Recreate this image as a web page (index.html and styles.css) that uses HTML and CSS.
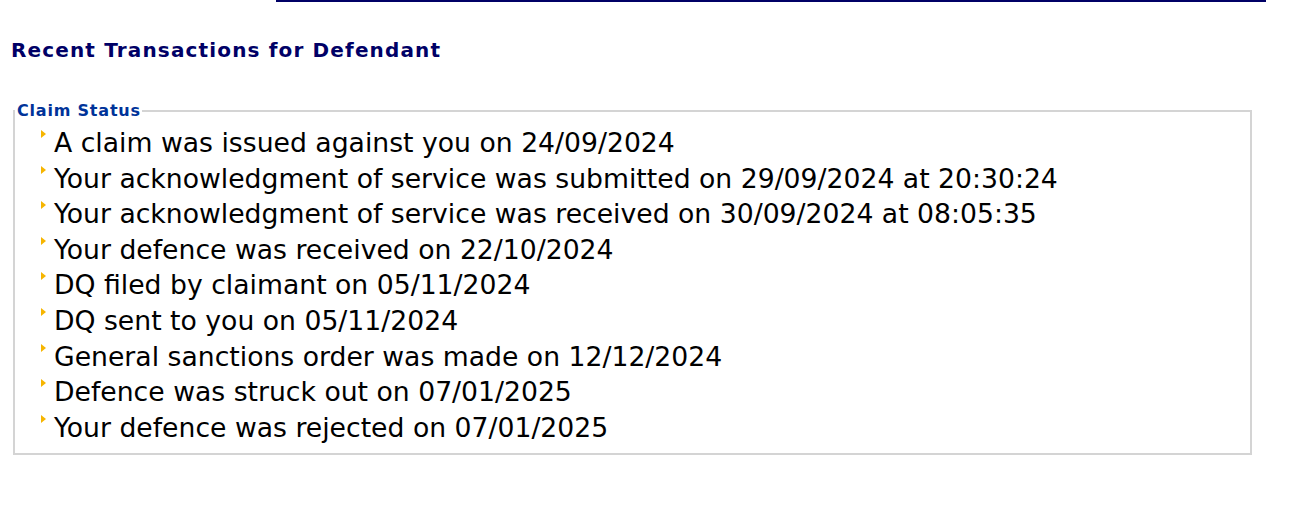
FILE: index.html
```html
<!DOCTYPE html>
<html>
<head>
<meta charset="utf-8">
<link rel="stylesheet" href="styles.css">
</head>
<body>
<div class="topbar"></div>
<h1 class="title">Recent Transactions for Defendant</h1>
<fieldset class="status">
  <legend class="legend">Claim Status</legend>
  <ul class="list">
    <li class="item">A claim was issued against you on 24/09/2024</li>
    <li class="item">Your acknowledgment of service was submitted on 29/09/2024 at 20:30:24</li>
    <li class="item">Your acknowledgment of service was received on 30/09/2024 at 08:05:35</li>
    <li class="item">Your defence was received on 22/10/2024</li>
    <li class="item">DQ filed by claimant on 05/11/2024</li>
    <li class="item">DQ sent to you on 05/11/2024</li>
    <li class="item">General sanctions order was made on 12/12/2024</li>
    <li class="item">Defence was struck out on 07/01/2025</li>
    <li class="item">Your defence was rejected on 07/01/2025</li>
  </ul>
</fieldset>
</body>
</html>
```
FILE: styles.css
```css
html, body {
  margin: 0;
  padding: 0;
  background: #ffffff;
}
body {
  font-family: "DejaVu Sans", Verdana, sans-serif;
  color: #000000;
}
.topbar {
  margin-left: 276px;
  width: 990px;
  height: 2px;
  background: #000066;
}
.title {
  margin: 36px 0 0 11px;
  font-size: 20px;
  font-weight: bold;
  letter-spacing: 1.15px;
  color: #000066;
  line-height: 24px;
}
.status {
  margin: 39px 0 0 13px;
  width: 1239px;
  box-sizing: border-box;
  border: 2px solid #d4d4d4;
  padding: 4px 0 8px 0;
  min-inline-size: 0;
}
.legend {
  padding: 0 1px 0 2px;
  margin-left: 0;
  font-size: 16px;
  line-height: 20px;
  font-weight: bold;
  letter-spacing: 0.8px;
  color: #003399;
}
.list {
  list-style: none;
  margin: 0;
  padding: 0 0 0 26px;
}
.item {
  position: relative;
  padding-left: 13px;
  font-size: 26.67px;
  line-height: 35.6px;
}
.item::before {
  content: "";
  position: absolute;
  left: 0;
  top: 5px;
  width: 0;
  height: 0;
  border-top: 4px solid transparent;
  border-bottom: 4px solid transparent;
  border-left: 5px solid #f6b500;
}
```
